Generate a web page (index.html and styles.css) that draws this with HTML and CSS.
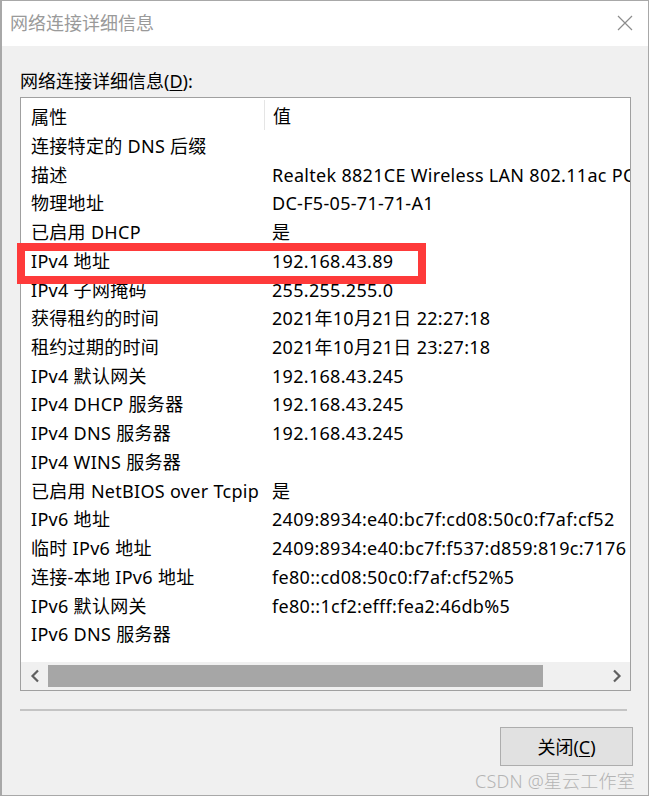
FILE: index.html
```html
<!DOCTYPE html>
<html lang="zh-CN">
<head>
<meta charset="utf-8">
<title>网络连接详细信息</title>
<link rel="stylesheet" href="styles.css">
</head>
<body>
<div class="window">
  <div class="titlebar">
    <span class="title">网络连接详细信息</span>
    <svg class="close" width="16" height="16" viewBox="0 0 16 16"><path d="M1 1L15 15M15 1L1 15" stroke="#8c8c8c" stroke-width="1.2" fill="none"/></svg>
  </div>
  <div class="content">
    <div class="label">网络连接详细信息(<u>D</u>):</div>
    <div class="listbox">
      <div class="header">
        <div class="c1">属性</div>
        <div class="c2 hdiv">值</div>
      </div>
      <div class="rows">
        <div class="row"><div class="c1">连接特定的 DNS 后缀</div><div class="c2"></div></div>
        <div class="row"><div class="c1">描述</div><div class="c2">Realtek 8821CE Wireless LAN 802.11ac PCI-E NIC</div></div>
        <div class="row"><div class="c1">物理地址</div><div class="c2">DC-F5-05-71-71-A1</div></div>
        <div class="row"><div class="c1">已启用 DHCP</div><div class="c2">是</div></div>
        <div class="row"><div class="c1">IPv4 地址</div><div class="c2">192.168.43.89</div></div>
        <div class="row"><div class="c1">IPv4 子网掩码</div><div class="c2">255.255.255.0</div></div>
        <div class="row"><div class="c1">获得租约的时间</div><div class="c2">2021年10月21日 22:27:18</div></div>
        <div class="row"><div class="c1">租约过期的时间</div><div class="c2">2021年10月21日 23:27:18</div></div>
        <div class="row"><div class="c1">IPv4 默认网关</div><div class="c2">192.168.43.245</div></div>
        <div class="row"><div class="c1">IPv4 DHCP 服务器</div><div class="c2">192.168.43.245</div></div>
        <div class="row"><div class="c1">IPv4 DNS 服务器</div><div class="c2">192.168.43.245</div></div>
        <div class="row"><div class="c1">IPv4 WINS 服务器</div><div class="c2"></div></div>
        <div class="row"><div class="c1">已启用 NetBIOS over Tcpip</div><div class="c2">是</div></div>
        <div class="row"><div class="c1">IPv6 地址</div><div class="c2">2409:8934:e40:bc7f:cd08:50c0:f7af:cf52</div></div>
        <div class="row"><div class="c1">临时 IPv6 地址</div><div class="c2">2409:8934:e40:bc7f:f537:d859:819c:7176</div></div>
        <div class="row"><div class="c1">连接-本地 IPv6 地址</div><div class="c2">fe80::cd08:50c0:f7af:cf52%5</div></div>
        <div class="row"><div class="c1">IPv6 默认网关</div><div class="c2">fe80::1cf2:efff:fea2:46db%5</div></div>
        <div class="row"><div class="c1">IPv6 DNS 服务器</div><div class="c2"></div></div>
      </div>
      <div class="hscroll">
        <div class="arrow">
          <svg width="12" height="14" viewBox="0 0 12 14"><path d="M9 1.5L3.5 7L9 12.5" stroke="#606060" stroke-width="2.2" fill="none"/></svg>
        </div>
        <div class="track"><div class="thumb"></div></div>
        <div class="arrow">
          <svg width="12" height="14" viewBox="0 0 12 14"><path d="M3 1.5L8.5 7L3 12.5" stroke="#606060" stroke-width="2.2" fill="none"/></svg>
        </div>
      </div>
    </div>
    <div class="separator"></div>
    <div class="buttons">
      <div class="btn">关闭(<u>C</u>)</div>
    </div>
  </div>
  <div class="highlight"></div>
  <div class="watermark">CSDN @星云工作室</div>
</div>
</body>
</html>
```
FILE: styles.css
```css
html, body {
  margin: 0;
  padding: 0;
  background: #ffffff;
}
body {
  font-family: "Noto Sans", "Noto Sans CJK SC", sans-serif;
  font-size: 18px;
  color: #000;
}
.window {
  position: relative;
  width: 646px;
  height: 794px;
  border: 1px solid #a8a8a8;
  border-left-width: 2px;
  background: #f0f0f0;
  display: flex;
  flex-direction: column;
  overflow: hidden;
}
.titlebar {
  height: 45px;
  background: #ffffff;
  display: flex;
  align-items: center;
  justify-content: space-between;
  padding: 0 15px 0 8px;
}
.title {
  color: #9a9a9a;
  font-size: 18px;
  line-height: 24px;
  margin-top: -2px;
}
.close {
  margin-top: -2px;
}
.content {
  flex: 1;
  display: flex;
  flex-direction: column;
  padding: 23px 16px 0 18px;
}
.label {
  line-height: 24px;
  height: 28px;
  white-space: nowrap;
}
.label u, .btn u {
  text-decoration-thickness: 1px;
  text-underline-offset: 2px;
}
.listbox {
  width: 609px;
  height: 592px;
  border: 1px solid #a0a0a0;
  background: #ffffff;
  display: flex;
  flex-direction: column;
  overflow: hidden;
  letter-spacing: 0.3px;
}
.header {
  height: 34px;
  display: flex;
  align-items: center;
  flex: none;
}
.header .c1, .header .c2 {
  padding-top: 2px;
}
.hdiv {
  border-left: 1px solid #e5e5e5;
  height: 30px;
  display: flex;
  align-items: center;
  padding-top: 0 !important;
  box-sizing: border-box;
}
.c1 {
  width: 233px;
  padding-left: 10px;
  flex: none;
  white-space: nowrap;
  overflow: hidden;
}
.c2 {
  padding-left: 8px;
  white-space: nowrap;
  flex: none;
}
.rows {
  flex: 1;
  overflow: hidden;
}
.row {
  height: 28.72px;
  line-height: 28.72px;
  display: flex;
  align-items: center;
}
.hscroll {
  flex: none;
  height: 28px;
  background: #f0f0f0;
  display: flex;
  align-items: stretch;
}
.arrow {
  width: 27px;
  flex: none;
  display: flex;
  align-items: center;
  justify-content: center;
}
.track {
  flex: 1;
  display: flex;
  align-items: center;
}
.thumb {
  width: 495px;
  height: 22px;
  background: #a6a6a6;
}
.separator {
  margin-top: 18px;
  width: 607px;
  height: 2px;
  background: #c4c4c4;
}
.buttons {
  display: flex;
  justify-content: flex-end;
  padding-top: 16px;
}
.btn {
  width: 131px;
  height: 37px;
  border: 1px solid #adadad;
  background: #e1e1e1;
  display: flex;
  align-items: center;
  justify-content: center;
  line-height: 24px;
  margin-right: -1px;
}
.highlight {
  position: absolute;
  left: 15px;
  top: 242px;
  width: 393px;
  height: 25px;
  border: 8px solid #fe3a3a;
}
.watermark {
  position: absolute;
  left: 473px;
  top: 768px;
  color: #b4b4b4;
  font-size: 18px;
  line-height: 24px;
  white-space: nowrap;
  font-weight: 300;
  letter-spacing: 0.2px;
}
```
